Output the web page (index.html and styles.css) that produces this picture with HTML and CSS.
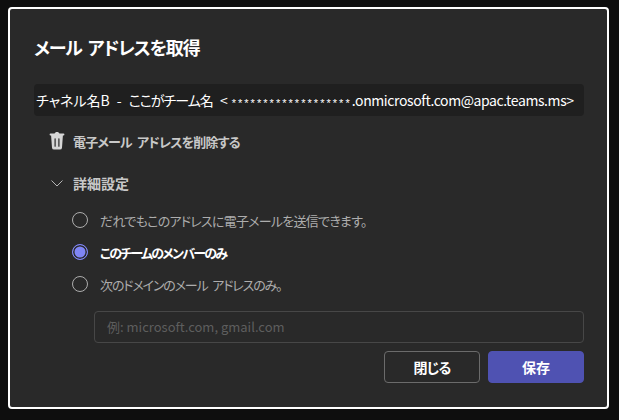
FILE: index.html
```html
<!DOCTYPE html>
<html lang="ja">
<head>
<meta charset="utf-8">
<title>メール アドレスを取得</title>
<link rel="stylesheet" href="styles.css">
</head>
<body>
<main class="dialog">
  <h1 class="title">メール アドレスを取得</h1>
  <div class="address"><span class="name">チャネル名B</span><span class="dash">-</span><span class="team">ここがチーム名</span><span class="lt">&lt;</span><span class="stars">*******************</span><span class="mail">.onmicrosoft.com@apac.teams.ms&gt;</span></div>
  <div class="action">
    <svg class="icon" viewBox="0 0 16 18" width="16" height="18" aria-hidden="true">
      <path fill="#d6d6d6" fill-rule="evenodd" d="M5.600 1.600C5.800.7 6.800 0 8 0s2.200.7 2.400 1.600h4.100a.9.9 0 0 1 0 1.800h-.6l-.9 12.300A2.100 2.100 0 0 1 10.900 17.600H5.100A2.100 2.100 0 0 1 3 15.700L2.100 3.400h-.6a.9.9 0 0 1 0-1.800zM6.100 6.200a.6.6 0 0 0-.6.6v7.400a.6.6 0 0 0 1.200 0V6.800a.6.6 0 0 0-.6-.6zm3.800 0a.6.6 0 0 0-.6.6v7.400a.6.6 0 0 0 1.200 0V6.800a.6.6 0 0 0-.6-.6z"/>
    </svg>
    <span class="delete-label">電子メール アドレスを削除する</span>
  </div>
  <div class="action advanced">
    <svg class="icon" viewBox="0 0 16 18" width="16" height="18" aria-hidden="true">
      <path fill="none" stroke="#b5b5b5" stroke-width="1" d="M2.500 6.500l5.500 5.500 5.500-5.500"/>
    </svg>
    <span>詳細設定</span>
  </div>
  <div class="options">
    <label class="option first"><span class="radio"></span><span>だれでもこのアドレスに電子メールを送信できます。</span></label>
    <label class="option selected"><span class="radio"></span><span>このチームのメンバーのみ</span></label>
    <label class="option third"><span class="radio"></span><span>次のドメインのメール アドレスのみ。</span></label>
  </div>
  <div class="domain">例: microsoft.com, gmail.com</div>
  <div class="buttons">
    <button class="btn">閉じる</button>
    <button class="btn primary">保存</button>
  </div>
</main>
</body>
</html>
```
FILE: styles.css
```css
* { box-sizing: border-box; }
html, body { height: 100%; }
body {
  margin: 0;
  padding: 7px 10px 11px 8px;
  background: #0e0e0e;
  font-family: "Noto Sans CJK JP", "Open Sans", sans-serif;
  font-feature-settings: "palt";
  color: #d6d6d6;
}
.dialog {
  height: 402px;
  border: 2px solid #fff;
  border-radius: 4px;
  background: #292929;
  padding: 23px 23px 0 24px;
  display: flex;
  flex-direction: column;
}
.title {
  margin: 0;
  font-size: 18px;
  line-height: 30px;
  letter-spacing: -1.100px;
  word-spacing: 3px;
  font-weight: 700;
  color: #fff;
  height: 30px;
}
.address {
  margin-top: 22px;
  height: 32px;
  background: #1f1f1f;
  border-radius: 4px;
  padding: 0 2px;
  font-size: 14px;
  line-height: 32px;
  color: #fff;
  white-space: nowrap;
  overflow: hidden;
  display: flex;
}
.dash { margin: 0 7px; }
.team { letter-spacing: -1px; }
.lt { margin-left: 7px; }
.stars { font-family: "Liberation Sans", sans-serif; font-size: 11px; line-height: 39px; letter-spacing: 2.040px; margin-left: 4px; }
.mail { letter-spacing: -0.400px; }
.action {
  display: flex;
  align-items: center;
  gap: 8px;
  margin-top: 10px;
  padding-left: 15px;
  height: 32px;
  font-size: 14px;
  font-weight: 700;
  color: #c8c8c8;
}
.address + .action { margin-top: 9px; }
.delete-label { font-size: 13px; letter-spacing: -0.800px; word-spacing: 3px; }
.options {
  margin-top: 5px;
  padding-left: 38px;
  display: flex;
  flex-direction: column;
}
.option {
  display: flex;
  align-items: center;
  gap: 12px;
  height: 32px;
  font-size: 13px;
  color: #adadad;
}
.first { letter-spacing: -0.750px; }
.third { letter-spacing: -1.150px; word-spacing: 3px; }
.radio {
  width: 16px;
  height: 16px;
  border: 1px solid #adadad;
  border-radius: 50%;
  flex: none;
}
.selected { color: #fff; font-weight: 700; letter-spacing: -1.750px; }
.selected .radio {
  border-color: #7f85f5;
  background: #7f85f5;
  box-shadow: inset 0 0 0 1.500px #292929;
}
.domain {
  margin: 11px 0 0 60px;
  height: 32px;
  border: 1px solid #474747;
  border-radius: 4px;
  padding: 0 12px;
  font-size: 13px;
  line-height: 30px;
  color: #5e5e5e;
}
.buttons {
  margin-top: 8px;
  display: flex;
  justify-content: flex-end;
  gap: 8px;
}
.btn {
  width: 96px;
  height: 32px;
  border: 1px solid #6b6b6b;
  border-radius: 4px;
  background: #292929;
  color: #fff;
  font: inherit;
  font-size: 14px;
  font-weight: 700;
  letter-spacing: -0.800px;
}
.primary {
  background: #4f52b2;
  border-color: #4f52b2;
  letter-spacing: 0;
}
```
